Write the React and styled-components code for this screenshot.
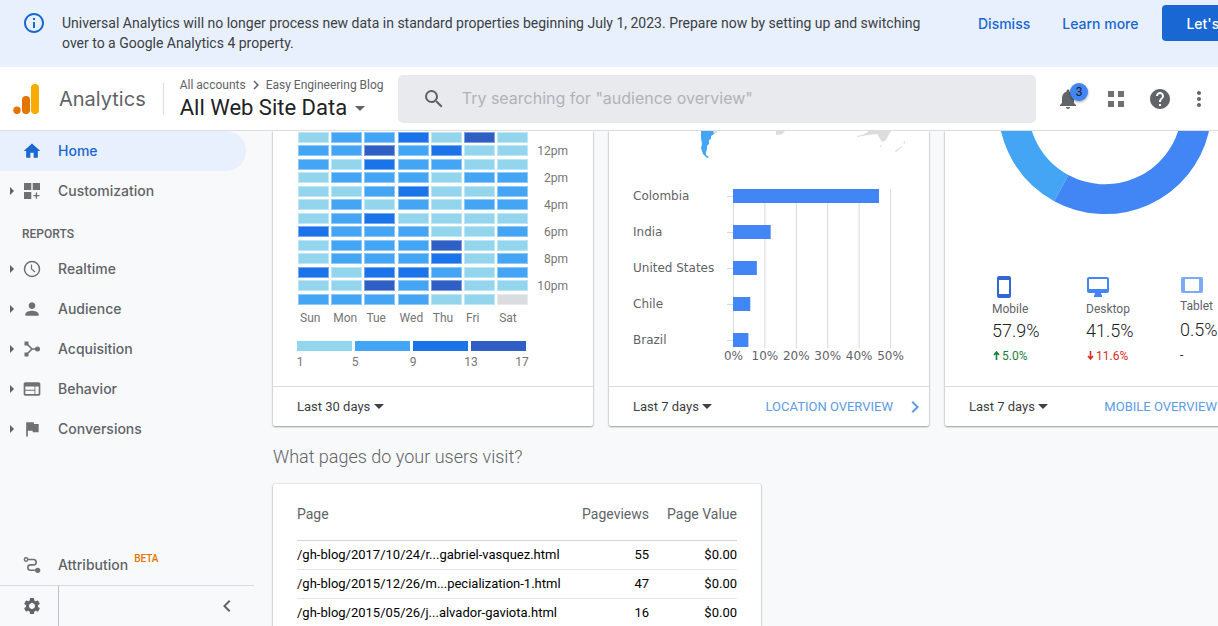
import React from "react";
import styled, { createGlobalStyle } from "styled-components";
import {
  MdHome,
  MdPerson,
  MdFlag,
  MdSettings,
  MdSearch,
  MdNotifications,
  MdHelp,
  MdMoreVert,
  MdWeb,
  MdChevronLeft,
  MdChevronRight,
  MdInfoOutline,
} from "react-icons/md";

const sans = `Roboto, "Liberation Sans", sans-serif`;
const display = `Inter, Roboto, sans-serif`;

const GlobalStyle = createGlobalStyle`
  *, *::before, *::after { box-sizing: border-box; }
  body {
    margin: 0;
    background: #f8f9fb;
    color: #202124;
    font-family: ${sans};
    font-size: 14px;
    overflow: hidden;
  }
  button, input, select { font: inherit; margin: 0; }
  h1, h2, p, ul { margin: 0; padding: 0; font-weight: 400; }
  svg { display: block; flex: none; }
`;

const Page = styled.div`
  display: flex;
  flex-direction: column;
  height: 100vh;
  overflow: hidden;
`;

/* Banner */

const Banner = styled.section`
  display: flex;
  align-items: flex-start;
  flex: none;
  padding: 5px 24px 14px 22px;
  background: #e8f0fe;
  overflow: hidden;
`;

const BannerIcon = styled.span`
  margin: 6px 16px 0 0;
  color: #1967d2;
`;

const BannerText = styled.p`
  flex: 1 0 900px;
  padding: 8px 20px 0 0;
  line-height: 20px;
  color: #3c4043;
`;

const BannerActions = styled.div`
  display: flex;
  flex: none;
`;

const TextButton = styled.button`
  height: 36px;
  padding: 0 16px;
  border: 0;
  background: none;
  color: #1967d2;
  font-family: ${display};
  font-size: 14px;
  font-weight: 500;
  white-space: nowrap;
`;

const FilledButton = styled(TextButton)`
  margin-left: 8px;
  padding: 0 24px;
  border-radius: 4px;
  background: #1967d2;
  color: #fff;
`;

/* Header */

const Header = styled.header`
  display: flex;
  align-items: center;
  flex: none;
  height: 64px;
  padding-left: 13px;
  border-bottom: 1px solid #dadce0;
  background: #fff;
`;

const Brand = styled.a`
  display: flex;
  align-items: center;
  gap: 20px;
  padding-right: 17px;
  color: #5f6368;
  font-family: ${display};
  font-size: 20px;
  text-decoration: none;
`;

const Account = styled.div`
  display: flex;
  flex-direction: column;
  justify-content: center;
  flex: none;
  width: 235px;
  height: 32px;
  padding-left: 16px;
  border-left: 1px solid #dadce0;
`;

const Crumbs = styled.nav`
  display: flex;
  align-items: center;
  gap: 1px;
  color: #5f6368;
  font-size: 12px;
  line-height: 16px;
  white-space: nowrap;
`;

const Crumb = styled.a`
  color: inherit;
  text-decoration: none;
`;

const ViewButton = styled.button`
  display: flex;
  align-items: center;
  gap: 8px;
  padding: 1px 0 0;
  border: 0;
  background: none;
  color: #202124;
  font-size: 22px;
  line-height: 26px;
  white-space: nowrap;

  svg { color: #5f6368; }
`;

const Search = styled.label`
  display: flex;
  align-items: center;
  flex: 1;
  min-width: 0;
  height: 48px;
  padding: 0 24px;
  gap: 14px;
  border-radius: 5px;
  background: #e8eaed;
  color: #5f6368;
`;

const SearchInput = styled.input`
  flex: 1;
  min-width: 0;
  padding: 0 0 2px 2px;
  border: 0;
  outline: 0;
  background: none;
  font-family: ${display};
  font-size: 16px;
  &::placeholder { color: #b0b3b8; opacity: 1; }
`;

const Tools = styled.div`
  display: flex;
  align-items: center;
  padding-left: 8px;
  color: #616469;
`;

const IconButton = styled.button`
  position: relative;
  display: flex;
  align-items: center;
  justify-content: center;
  width: ${(p) => p.$width || 40}px;
  height: 40px;
  padding: 0;
  border: 0;
  background: none;
  color: inherit;
`;

const Badge = styled.span`
  position: absolute;
  top: 4px;
  left: 26px;
  width: 18px;
  height: 18px;
  border-radius: 9px;
  background: #4285f4;
  box-shadow: 0 1px 3px rgba(0, 0, 0, 0.4);
  color: #202124;
  font-size: 12px;
  line-height: 18px;
  text-align: center;
`;

/* Sidebar */

const Body = styled.div`
  display: flex;
  flex: 1;
  min-height: 0;
`;

const Sidebar = styled.nav`
  display: flex;
  flex-direction: column;
  flex: none;
  width: 254px;
`;

const NavItem = styled.a`
  display: flex;
  align-items: center;
  height: 40px;
  margin-right: 8px;
  padding-left: 10px;
  border-radius: 0 20px 20px 0;
  background: ${(p) => (p.$active ? "#e8f0fe" : "transparent")};
  color: ${(p) => (p.$active ? "#1967d2" : "#5f6368")};
  font-family: ${display};
  font-size: 14px;
  font-weight: 500;
  text-decoration: none;
`;

const NavArrow = styled.span`
  width: 12px;
`;

const NavIcon = styled.span`
  width: 20px;
  margin-right: 16px;
  color: ${(p) => (p.$active ? "#1967d2" : "#707070")};
`;

const NavLabel = styled.span`
  padding-bottom: 2px;
`;

const NavHeading = styled.h2`
  padding: 15px 22px 7px;
  color: #5f6368;
  font-size: 12px;
  font-weight: 500;
  line-height: 16px;
`;

const Beta = styled.sup`
  align-self: flex-start;
  margin: 8px 0 0 6px;
  color: #e37400;
  font-family: ${sans};
  font-size: 10px;
  font-weight: 500;
  line-height: 12px;
`;

const Spacer = styled.div`
  flex: 1;
`;

const SidebarFooter = styled.div`
  display: flex;
  justify-content: space-between;
  height: 41px;
  border-top: 1px solid #dadce0;
  color: #616469;
`;

const SettingsCell = styled.div`
  width: 59px;
  padding-left: 12px;
  border-right: 1px solid #bdc1c6;
`;

const CollapseCell = styled.div`
  padding-right: 7px;
`;

/* Main content */

const Main = styled.main`
  flex: 1;
  min-width: 0;
  padding-left: 19px;
  overflow: hidden;
`;

const CardRow = styled.div`
  display: flex;
  gap: 16px;
`;

const Card = styled.section`
  flex: none;
  width: ${(p) => p.$width || 320}px;
  border-radius: ${(p) => (p.$whole ? "2px" : "0 0 2px 2px")};
  background: #fff;
  box-shadow: 0 1px 2px rgba(0, 0, 0, 0.35), 0 0 2px rgba(0, 0, 0, 0.2);
`;

const CardBody = styled.div`
  height: 255px;
  overflow: hidden;
`;

const CardFooter = styled.footer`
  display: flex;
  align-items: center;
  height: 40px;
  padding: 0 2px 0 24px;
  border-top: 1px solid #dadce0;
  font-size: 13px;
`;

const RangePicker = styled.span`
  display: flex;
  align-items: center;
  gap: 3px;
  color: #3c4043;
`;

const RangeSelect = styled.select`
  appearance: none;
  padding: 0;
  border: 0;
  background: none;
  color: inherit;
`;

const OverviewLink = styled.a`
  display: flex;
  align-items: center;
  gap: ${(p) => (p.$wide ? 22 : 10)}px;
  margin-left: auto;
  color: #5c9ce6;
  text-decoration: none;
  white-space: nowrap;
`;

const ChartText = styled.text`
  fill: ${(p) => (p.$plain ? "#5f6368" : "#757575")};
  font-family: ${(p) => (p.$plain ? `"DejaVu Sans", sans-serif` : sans)};
  font-size: 12px;
`;

const Devices = styled.ul`
  display: flex;
  padding: 60px 0 0 47px;
  list-style: none;
`;

const Device = styled.li`
  width: 94px;
  flex: none;
  font-size: 12px;
`;

const DeviceName = styled.div`
  padding: 1px 0 ${(p) => (p.$loose ? 4 : 2)}px;
  line-height: 16px;
  color: #5f6368;
`;

const DeviceShare = styled.div`
  padding-bottom: 4px;
  color: #202124;
  font-size: 18px;
  font-weight: 300;
  line-height: 24px;
`;

const DeviceChange = styled.div`
  display: flex;
  align-items: center;
  gap: 1px;
  line-height: 18px;
  color: ${(p) => p.$color};
`;

const SectionTitle = styled.h2`
  padding: 18px 0 15px;
  color: #5f6368;
  font-size: 18px;
  font-weight: 300;
  line-height: 25px;
`;

const Table = styled.table`
  width: 440px;
  margin: 0 24px;
  border-collapse: collapse;
  font-size: 13px;
  color: #000;
`;

const HeadCell = styled.th`
  width: ${(p) => p.$width || "auto"};
  height: 56px;
  padding: 4px 0 0;
  border-bottom: 1px solid #d4d4d4;
  color: #5f6368;
  font-size: 14px;
  font-weight: 400;
  text-align: ${(p) => (p.$number ? "right" : "left")};
`;

const Cell = styled.td`
  height: 29px;
  padding: 0;
  border-bottom: 1px solid #e4e4e4;
  text-align: ${(p) => (p.$number ? "right" : "left")};
`;

const Caret = () => (
  <svg width="10" height="5" viewBox="0 0 10 5" fill="currentColor" aria-hidden="true">
    <path d="M0 0h10L5 5z" />
  </svg>
);

const Logo = () => (
  <svg width="26" height="30" viewBox="0 0 26 30" aria-hidden="true">
    <rect x="18" y="0" width="8" height="30" rx="4" fill="#f9ab00" />
    <rect x="9" y="12" width="8" height="18" rx="4" fill="#e37400" />
    <circle cx="4" cy="26.200" r="3.700" fill="#e37400" />
  </svg>
);

const Glyph = ({ children }) => (
  <svg width="20" height="20" viewBox="0 0 20 20" fill="currentColor" aria-hidden="true">
    {children}
  </svg>
);

const CustomizationIcon = () => (
  <Glyph>
    <path d="M2 2h7.300v7H2zM10.700 2H18v7h-7.300zM2 11h7.300v7H2zM13.700 11.500h1.400V14h2.400v1.300h-2.400v2.400h-1.400v-2.400h-2.400V14h2.400z" />
  </Glyph>
);

const ClockIcon = () => (
  <Glyph>
    <circle cx="10" cy="10" r="7.500" fill="none" stroke="currentColor" strokeWidth="1.500" />
    <path d="M9.500 5.500V10l3.500 3" fill="none" stroke="currentColor" strokeWidth="1.200" />
  </Glyph>
);

const AcquisitionIcon = () => (
  <Glyph>
    <path d="M2.500 2.500h4v4h-4zM2.500 13.500h4v4h-4z" />
    <circle cx="15.500" cy="10" r="2.500" />
    <path d="M5 5l5 5-5 5M10 10h5" fill="none" stroke="currentColor" strokeWidth="1.600" />
  </Glyph>
);

const AttributionIcon = () => (
  <Glyph>
    <path
      d="M6 4.500h5.500a2.700 2.700 0 0 1 0 5.400H8.500a2.700 2.700 0 0 0 0 5.400H14"
      fill="none"
      stroke="currentColor"
      strokeWidth="1.600"
    />
    <circle cx="4" cy="4.500" r="1.700" fill="none" stroke="currentColor" strokeWidth="1.400" />
    <circle cx="15.700" cy="15.300" r="2.600" />
  </Glyph>
);

const AppsIcon = () => (
  <svg width="16" height="16" viewBox="0 0 16 16" fill="#707070" aria-hidden="true">
    <path d="M0 0h6v6H0zM10 0h6v6h-6zM0 10h6v6H0zM10 10h6v6h-6z" />
  </svg>
);

const NavArrowIcon = () => (
  <svg width="4" height="8" viewBox="0 0 4 8" fill="currentColor" aria-hidden="true">
    <path d="M0 0l4 4-4 4z" />
  </svg>
);

const heatColors = ["#dadce0", "#93d5ed", "#45a5f5", "#1a73e8", "#2f5ec4"];
const heatRows = [
  "1223141",
  "2242311",
  "2132211",
  "1222122",
  "1123112",
  "1212122",
  "1231111",
  "3222112",
  "1222411",
  "1222312",
  "3133212",
  "1142411",
  "2222110",
];
const days = ["Sun", "Mon", "Tue", "Wed", "Thu", "Fri", "Sat"];
const hours = ["12pm", "2pm", "4pm", "6pm", "8pm", "10pm"];
const legend = [1, 5, 9, 13, 17];

const HeatMap = () => (
  <svg width="320" height="255" role="img" aria-label="Users by time of day">
    {heatRows.map((row, r) =>
      [...row].map((level, c) => {
        const x = Math.round(25 + c * 33.2);
        const y = Math.round(0.6 + r * 13.5);
        return (
          <g key={`${r}-${c}`} fill={heatColors[level]}>
            <rect x={x} y={y} width="31" height="11" opacity="0.6" />
            <rect x={x + 1} y={y + 1} width="29" height="9" />
          </g>
        );
      })
    )}
    {hours.map((h, i) => (
      <ChartText key={h} x="295" y={24 + i * 27} textAnchor="end">{h}</ChartText>
    ))}
    {days.map((d, i) => (
      <ChartText key={d} x={27 + i * 33.2} y="191">{d}</ChartText>
    ))}
    {legend.slice(0, 4).map((n, i) => (
      <rect key={n} x={24 + i * 58} y="210" width="55" height="10" fill={heatColors[i + 1]} />
    ))}
    {legend.map((n, i) => (
      <ChartText key={n} x={[27, 82, 140, 198, 249][i]} y="235" textAnchor="middle">{n}</ChartText>
    ))}
  </svg>
);

const countries = [
  ["Colombia", 46.5],
  ["India", 12],
  ["United States", 7.6],
  ["Chile", 5.5],
  ["Brazil", 4.9],
];

const LocationChart = () => (
  <svg width="320" height="255" role="img" aria-label="Users by country">
    <path
      d="M92 0h14l-1 3-3 2v3l-2 1v4l-2 2v3l-1 3v3l3 2-2 1-4-4-2-6 1-4-1-6z"
      fill="#45a5f5"
    />
    <path
      d="M104 0h4v2l-3 1zM167 0h9l-3 3-6 1zM248 5l5-1 6-3V0h23l-3 5-2 4-4 2-5-8-9 1-11 2zM271 15l2-1-1 2h-1zM286 20l7-5v1l-6 5zM294 14l2-5v3z"
      fill="#dcdcdc"
    />
    {[0, 1, 2, 3, 4, 5].map((i) => (
      <g key={i}>
        <rect x={124 + i * 31.4} y="58" width="1" height="159" fill="#dadada" />
        <ChartText $plain x={124.5 + i * 31.4} y="229" textAnchor="middle">{i * 10}%</ChartText>
      </g>
    ))}
    {countries.map(([name, share], i) => (
      <g key={name}>
        <ChartText $plain x="24" y={69 + i * 36}>{name}</ChartText>
        <rect x="118" y={65 + i * 36} width="6" height="1" fill="#dadada" />
        <rect x="124" y={58 + i * 36} width={share * 3.14} height="14" fill="#4285f4" />
      </g>
    ))}
  </svg>
);

const arc = (from, to, r, cx, cy) => {
  const at = (share) => {
    const a = share * 2 * Math.PI;
    return `${cx + r * Math.sin(a)} ${cy - r * Math.cos(a)}`;
  };
  return `M${at(from)}A${r} ${r} 0 ${to - from > 0.5 ? 1 : 0} 1 ${at(to)}`;
};

const Donut = () => (
  <svg width="320" height="85" fill="none" strokeWidth="29.800" role="img" aria-label="Sessions by device">
    <path d={arc(0.579, 0.994, 91.7, 160, -23.5)} stroke="#45a5f5" />
    <path d={arc(0, 0.579, 91.7, 160, -23.5)} stroke="#4285f4" />
  </svg>
);

const MobileIcon = () => (
  <svg width="24" height="24" viewBox="0 0 24 24" fill="#3367d6" fillRule="evenodd" aria-hidden="true">
    <path d="M7 0h10a2 2 0 0 1 2 2v18a2 2 0 0 1-2 2H7a2 2 0 0 1-2-2V2a2 2 0 0 1 2-2zM7 4v14h10V4z" />
  </svg>
);

const DesktopIcon = () => (
  <svg width="24" height="24" viewBox="0 0 24 24" fill="#4285f4" fillRule="evenodd" aria-hidden="true">
    <path d="M3 1h18a2 2 0 0 1 2 2v12a2 2 0 0 1-2 2h-6l1 3v1H8v-1l1-3H3a2 2 0 0 1-2-2V3a2 2 0 0 1 2-2zM3 3v10h18V3z" />
  </svg>
);

const TabletIcon = () => (
  <svg width="24" height="21" viewBox="0 0 24 21" fill="#7baaf7" fillRule="evenodd" aria-hidden="true">
    <path d="M3 1h18a2 2 0 0 1 2 2v12a2 2 0 0 1-2 2H3a2 2 0 0 1-2-2V3a2 2 0 0 1 2-2zM5 3v12h14V3z" />
  </svg>
);

const TrendArrow = ({ down }) => (
  <svg width="9" height="10" viewBox="0 0 9 10" fill="none" stroke="currentColor" strokeWidth="1.600" aria-hidden="true">
    <path d={down ? "M4.500 0v8M2 5l2.500 3L7 5" : "M4.500 9V1M2 4l2.500-3L7 4"} />
  </svg>
);

const Nav = ({ icon, label, active, plain, children }) => (
  <NavItem href="#" $active={active} aria-current={active ? "page" : undefined}>
    <NavArrow>{!active && !plain && <NavArrowIcon />}</NavArrow>
    <NavIcon $active={active}>{icon}</NavIcon>
    <NavLabel>{label}</NavLabel>
    {children}
  </NavItem>
);

const Range = ({ value }) => (
  <RangePicker>
    <RangeSelect aria-label="Date range" defaultValue={value}>
      <option>{value}</option>
    </RangeSelect>
    <Caret />
  </RangePicker>
);

const pages = [
  ["/gh-blog/2017/10/24/r...gabriel-vasquez.html", "55", "$0.00"],
  ["/gh-blog/2015/12/26/m...pecialization-1.html", "47", "$0.00"],
  ["/gh-blog/2015/05/26/j...alvador-gaviota.html", "16", "$0.00"],
];

export default function App() {
  return (
    <Page>
      <GlobalStyle />
      <Banner>
        <BannerIcon><MdInfoOutline size={24} /></BannerIcon>
        <BannerText>
          Universal Analytics will no longer process new data in standard properties beginning July 1,
          2023. Prepare now by setting up and switching over to a Google Analytics 4 property.
        </BannerText>
        <BannerActions>
          <TextButton>Dismiss</TextButton>
          <TextButton>Learn more</TextButton>
          <FilledButton>Let's go</FilledButton>
        </BannerActions>
      </Banner>
      <Header>
        <Brand href="#"><Logo />Analytics</Brand>
        <Account>
          <Crumbs aria-label="Account">
            <Crumb href="#">All accounts</Crumb>
            <MdChevronRight size={18} />
            <Crumb href="#">Easy Engineering Blog</Crumb>
          </Crumbs>
          <ViewButton>All Web Site Data<Caret /></ViewButton>
        </Account>
        <Search>
          <MdSearch size={24} />
          <SearchInput type="search" aria-label="Search" placeholder={'Try searching for "audience overview"'} />
        </Search>
        <Tools>
          <IconButton $width={48} aria-label="Notifications">
            <MdNotifications size={24} />
            <Badge>3</Badge>
          </IconButton>
          <IconButton $width={48} aria-label="Apps"><AppsIcon /></IconButton>
          <IconButton aria-label="Help"><MdHelp size={24} /></IconButton>
          <IconButton $width={38} aria-label="More"><MdMoreVert size={24} /></IconButton>
        </Tools>
      </Header>
      <Body>
        <Sidebar aria-label="Reports">
          <Nav active icon={<MdHome size={20} />} label="Home" />
          <Nav icon={<CustomizationIcon />} label="Customization" />
          <NavHeading>REPORTS</NavHeading>
          <Nav icon={<ClockIcon />} label="Realtime" />
          <Nav icon={<MdPerson size={20} />} label="Audience" />
          <Nav icon={<AcquisitionIcon />} label="Acquisition" />
          <Nav icon={<MdWeb size={20} />} label="Behavior" />
          <Nav icon={<MdFlag size={20} />} label="Conversions" />
          <Spacer />
          <Nav plain icon={<AttributionIcon />} label="Attribution"><Beta>BETA</Beta></Nav>
          <SidebarFooter>
            <SettingsCell>
              <IconButton aria-label="Admin"><MdSettings size={20} /></IconButton>
            </SettingsCell>
            <CollapseCell>
              <IconButton aria-label="Collapse"><MdChevronLeft size={24} /></IconButton>
            </CollapseCell>
          </SidebarFooter>
        </Sidebar>
        <Main>
          <CardRow>
            <Card>
              <CardBody><HeatMap /></CardBody>
              <CardFooter><Range value="Last 30 days" /></CardFooter>
            </Card>
            <Card>
              <CardBody><LocationChart /></CardBody>
              <CardFooter>
                <Range value="Last 7 days" />
                <OverviewLink href="#">LOCATION OVERVIEW<MdChevronRight size={24} /></OverviewLink>
              </CardFooter>
            </Card>
            <Card>
              <CardBody>
                <Donut />
                <Devices>
                  <Device>
                    <MobileIcon />
                    <DeviceName>Mobile</DeviceName>
                    <DeviceShare>57.9%</DeviceShare>
                    <DeviceChange $color="#188038"><TrendArrow />5.0%</DeviceChange>
                  </Device>
                  <Device>
                    <DesktopIcon />
                    <DeviceName>Desktop</DeviceName>
                    <DeviceShare>41.5%</DeviceShare>
                    <DeviceChange $color="#d93025"><TrendArrow down />11.6%</DeviceChange>
                  </Device>
                  <Device>
                    <TabletIcon />
                    <DeviceName $loose>Tablet</DeviceName>
                    <DeviceShare>0.5%</DeviceShare>
                    <DeviceChange $color="#202124">-</DeviceChange>
                  </Device>
                </Devices>
              </CardBody>
              <CardFooter>
                <Range value="Last 7 days" />
                <OverviewLink href="#" $wide>MOBILE OVERVIEW<MdChevronRight size={24} /></OverviewLink>
              </CardFooter>
            </Card>
          </CardRow>
          <SectionTitle>What pages do your users visit?</SectionTitle>
          <Card $width={488} $whole>
            <Table>
              <thead>
                <tr>
                  <HeadCell>Page</HeadCell>
                  <HeadCell $number>Pageviews</HeadCell>
                  <HeadCell $number $width="88px">Page Value</HeadCell>
                </tr>
              </thead>
              <tbody>
                {pages.map(([path, views, value]) => (
                  <tr key={path}>
                    <Cell>{path}</Cell>
                    <Cell $number>{views}</Cell>
                    <Cell $number>{value}</Cell>
                  </tr>
                ))}
              </tbody>
            </Table>
          </Card>
        </Main>
      </Body>
    </Page>
  );
}
